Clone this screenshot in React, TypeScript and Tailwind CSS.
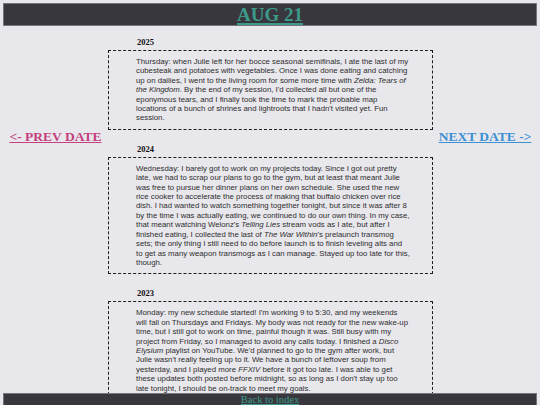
import React from 'react';

interface Entry {
    year: string;
    body: React.ReactNode;
}

const entries: Entry[] = [
    {
        year: '2025',
        body: (
            <>
                Thursday: when Julie left for her bocce seasonal semifinals, I ate the last of my cubesteak and potatoes with
                vegetables. Once I was done eating and catching up on dailies, I went to the living room for some more time
                with <i>Zelda: Tears of the Kingdom</i>. By the end of my session, I'd collected all but one of the eponymous
                tears, and I finally took the time to mark the probable map locations of a bunch of shrines and lightroots
                that I hadn't visited yet. Fun session.
            </>
        ),
    },
    {
        year: '2024',
        body: (
            <>
                Wednesday: I barely got to work on my projects today. Since I got out pretty late, we had to scrap our plans
                to go to the gym, but at least that meant Julie was free to pursue her dinner plans on her own schedule. She
                used the new rice cooker to accelerate the process of making that buffalo chicken over rice dish. I had wanted
                to watch something together tonight, but since it was after 8 by the time I was actually eating, we continued
                to do our own thing. In my case, that meant watching Welonz's <i>Telling Lies</i> stream vods as I ate, but
                after I finished eating, I collected the last of <i>The War Within</i>'s prelaunch transmog sets; the only
                thing I still need to do before launch is to finish leveling alts and to get as many weapon transmogs as I can
                manage. Stayed up too late for this, though.
            </>
        ),
    },
    {
        year: '2023',
        body: (
            <>
                Monday: my new schedule started! I'm working 9 to 5:30, and my weekends will fall on Thursdays and Fridays.
                My body was not ready for the new wake-up time, but I still got to work on time, painful though it was. Still
                busy with my project from Friday, so I managed to avoid any calls today. I finished a <i>Disco Elysium</i>{' '}
                playlist on YouTube. We'd planned to go to the gym after work, but Julie wasn't really feeling up to it. We
                have a bunch of leftover soup from yesterday, and I played more <i>FFXIV</i> before it got too late. I was
                able to get these updates both posted before midnight, so as long as I don't stay up too late tonight, I
                should be on-track to meet my goals.
            </>
        ),
    },
];

const serif = "font-['Liberation_Serif',serif]";

const App = () => {
    return (
        <div className="min-h-screen bg-[#e8e7ec] pt-[3px] pb-[40px]">
            <header className="mx-[3px] h-[23px] bg-[#38373d] border border-[#76757b] flex items-center justify-center">
                <a
                    href="#"
                    className={`${serif} text-[19px] leading-none font-bold text-[#3d9a8b] underline decoration-[2px] underline-offset-[2px]`}
                >
                    AUG 21
                </a>
            </header>

            <div className="mx-[3px] grid grid-cols-[105px_325px_1fr]">
                <div className="flex justify-center pt-[103px]">
                    <a href="#" className={`${serif} text-[13.5px] leading-[15px] font-bold text-[#c4407e] underline`}>
                        &lt;- PREV DATE
                    </a>
                </div>

                <main className="pt-[11px]">
                    {entries.map((entry) => (
                        <section key={entry.year} className="mb-[14px]">
                            <h3 className={`${serif} ml-[29px] mb-[3px] text-[8.5px] leading-[10px] font-bold text-[#111]`}>
                                {entry.year}
                            </h3>
                            <div className="border-[1.5px] border-dashed border-[#1c1c1c] pl-[27px] pr-[22px] py-[6px]">
                                <p className="font-['Liberation_Sans',Arial,sans-serif] text-[7.8px] leading-[9.4px] text-[#2e2e2e]">
                                    {entry.body}
                                </p>
                            </div>
                        </section>
                    ))}
                </main>

                <div className="flex justify-center pt-[103px]">
                    <a href="#" className={`${serif} text-[13.5px] leading-[15px] font-bold text-[#3b8fd3] underline`}>
                        NEXT DATE -&gt;
                    </a>
                </div>
            </div>

            <footer className="fixed bottom-0 left-[3px] right-[3px] h-[12px] bg-[#38373d] border border-b-0 border-[#76757b] flex justify-center overflow-hidden">
                <a href="#" className={`${serif} text-[10.5px] leading-[12px] text-[#3d9a8b] underline`}>
                    Back to index
                </a>
            </footer>
        </div>
    );
};

export default App;
